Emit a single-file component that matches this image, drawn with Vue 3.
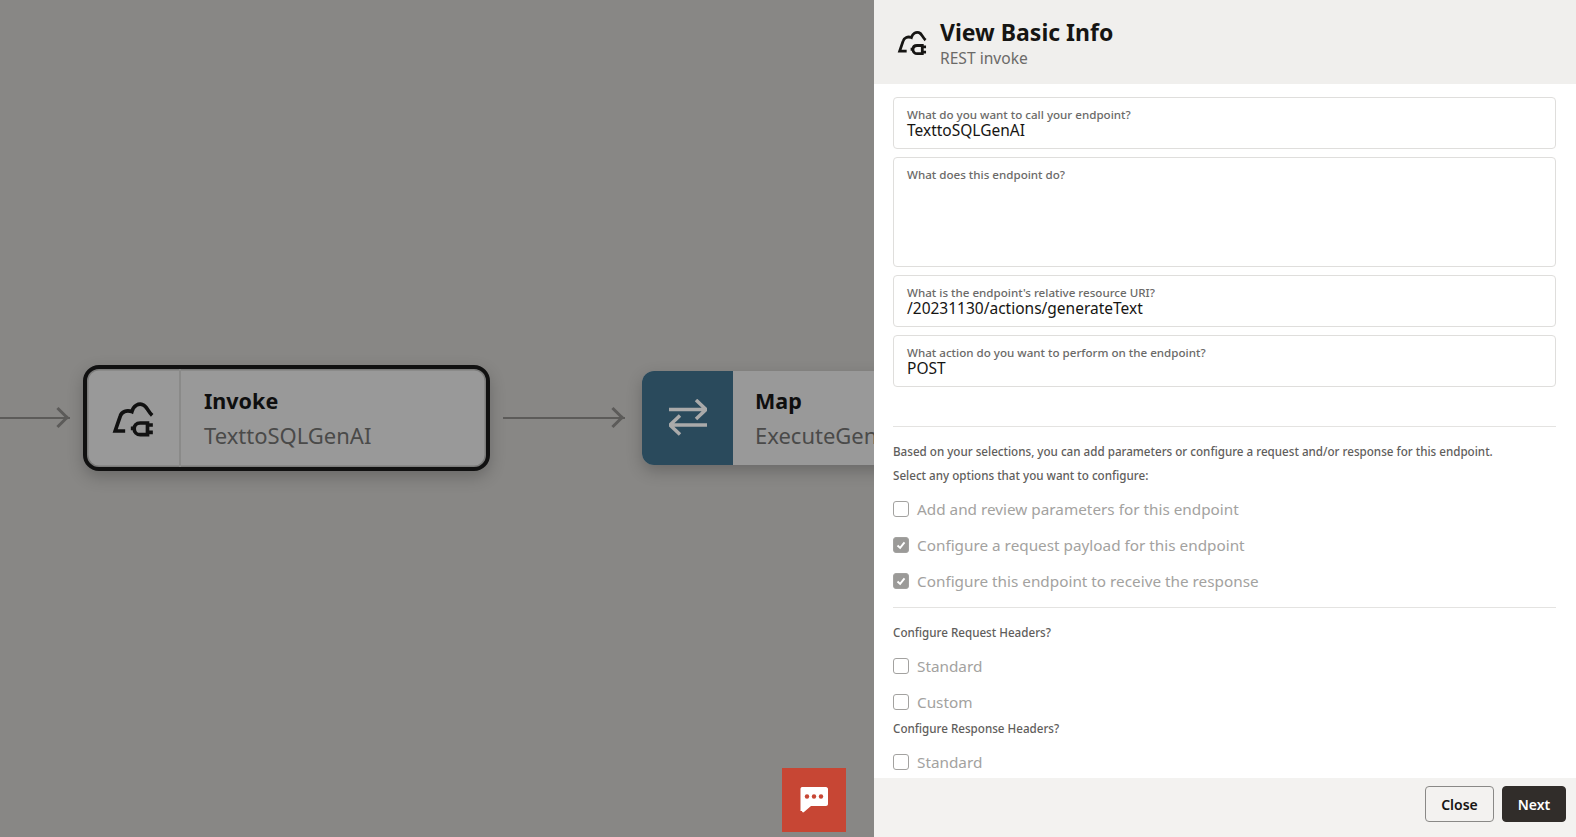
<template>
  <div class="page">
    <div class="canvas">
      <div class="arrow arrow-in"></div>
      <div class="node node-selected">
        <div class="node-icon">
          <svg class="cloud-plug" viewBox="60 53 140 120" fill="none" stroke="#111" stroke-width="11">
            <path d="M105 152H75L90 108C94 94 110 88 125 94C130 76 145 68 158 73C170 77 172 92 186 105" />
            <path d="M122 144H134M172 128H150C138 128 132 136 132 145C132 155 140 163 150 163H172V128ZM172 134H188M172 156H188" />
          </svg>
        </div>
        <div class="node-text">
          <div class="node-type">Invoke</div>
          <div class="node-name">TexttoSQLGenAI</div>
        </div>
      </div>
      <div class="arrow arrow-mid"></div>
      <div class="node node-map">
        <div class="node-icon map-icon">
          <svg class="swap" viewBox="0 0 38 37" fill="none" stroke="#aaa" stroke-width="3.500">
            <path d="M0 10.500H37M27 1L37 10.500L27 20" />
            <path d="M38 26H1M11 16.500L1 26L11 35.500" />
          </svg>
        </div>
        <div class="node-text">
          <div class="node-type">Map</div>
          <div class="node-name">ExecuteGenAISQL</div>
        </div>
      </div>
      <button class="chat-btn">
        <svg viewBox="0 0 28 26" width="28" height="26">
          <path fill="#fff" d="M2 0H26C27 0 28 1 28 2V17C28 18 27 19 26 19H11L4 25C3 26 2 25 2 24L0.500 24V2C0.500 1 1 0 2 0Z" />
          <circle cx="7" cy="9.500" r="2.200" fill="#c74634" />
          <circle cx="14" cy="9.500" r="2.200" fill="#c74634" />
          <circle cx="21" cy="9.500" r="2.200" fill="#c74634" />
        </svg>
      </button>
    </div>

    <aside class="drawer">
      <header class="drawer-head">
        <svg class="head-icon" viewBox="60 53 140 120" fill="none" stroke="#161513" stroke-width="12">
          <path d="M105 152H75L90 108C94 94 110 88 125 94C130 76 145 68 158 73C170 77 172 92 186 105" />
          <path d="M122 144H134M172 128H150C138 128 132 136 132 145C132 155 140 163 150 163H172V128ZM172 134H188M172 156H188" />
        </svg>
        <div class="head-text">
          <h1>View Basic Info</h1>
          <div class="subtitle">REST invoke</div>
        </div>
      </header>

      <div class="drawer-body">
        <div v-for="field in fields" :key="field.label" class="field" :class="{ tall: field.tall }">
          <div class="field-label">{{ field.label }}</div>
          <div class="field-value">{{ field.value }}</div>
        </div>

        <hr class="rule rule-first" />
        <p class="note note-first">Based on your selections, you can add parameters or configure a request and/or response for this endpoint.</p>
        <p class="note note-second">Select any options that you want to configure:</p>

        <label v-for="opt in options" :key="opt.text" class="check">
          <span class="box" :class="{ on: opt.on }">
            <svg v-if="opt.on" viewBox="0 0 16 16" width="14" height="14" fill="none" stroke="#fff" stroke-width="2.200">
              <path d="M4 8.500L7 11.300L12 5" />
            </svg>
          </span>
          {{ opt.text }}
        </label>

        <hr class="rule rule-second" />
        <p class="note note-req">Configure Request Headers?</p>
        <label class="check"><span class="box"></span>Standard</label>
        <label class="check"><span class="box"></span>Custom</label>
        <p class="note note-res">Configure Response Headers?</p>
        <label class="check"><span class="box"></span>Standard</label>
      </div>

      <footer class="drawer-foot">
        <button class="btn">Close</button>
        <button class="btn btn-primary">Next</button>
      </footer>
    </aside>
  </div>
</template>

<script setup>
const fields = [
  { label: "What do you want to call your endpoint?", value: "TexttoSQLGenAI" },
  { label: "What does this endpoint do?", value: "", tall: true },
  { label: "What is the endpoint's relative resource URI?", value: "/20231130/actions/generateText" },
  { label: "What action do you want to perform on the endpoint?", value: "POST" },
];

const options = [
  { text: "Add and review parameters for this endpoint", on: false },
  { text: "Configure a request payload for this endpoint", on: true },
  { text: "Configure this endpoint to receive the response", on: true },
];
</script>

<style>
html,
body {
  margin: 0;
  overflow: hidden;
}
</style>

<style scoped>
.page {
  display: flex;
  width: 1576px;
  height: 837px;
  overflow: hidden;
  font-family: "Noto Sans", "Open Sans", sans-serif;
  color: #161513;
}

.canvas {
  position: relative;
  flex: 0 0 874px;
  display: flex;
  align-items: center;
  overflow: hidden;
  background: #888785;
  padding-bottom: 2px;
  box-sizing: border-box;
}

.arrow {
  position: relative;
  flex: none;
  height: 2px;
  background: #5c5b59;
}

.arrow::after {
  content: "";
  position: absolute;
  right: 4px;
  top: -6.500px;
  width: 15px;
  height: 15px;
  border-top: 3px solid #5c5b59;
  border-right: 3px solid #5c5b59;
  box-sizing: border-box;
  transform: rotate(45deg);
}

.arrow-in {
  width: 70px;
  margin-right: 13px;
}

.arrow-mid {
  width: 122px;
  margin: 0 17px 0 13px;
}

.node {
  flex: none;
  display: flex;
  height: 94px;
  background: #999;
  border-radius: 12px;
  box-sizing: border-box;
  box-shadow: 0 6px 16px rgba(0, 0, 0, 0.22);
}

.node-selected {
  width: 407px;
  height: 106px;
  border: 4px solid #111;
  border-radius: 16px;
  box-shadow: 0 6px 16px rgba(0, 0, 0, 0.22), inset 0 0 0 1.500px #7c7c7b;
}

.node-map {
  width: 420px;
  overflow: hidden;
}

.node-icon {
  flex: none;
  width: 92px;
  display: flex;
  align-items: center;
  justify-content: center;
  border-right: 2px solid #8a8a89;
}

.map-icon {
  width: 91px;
  background: #2a4a5c;
  border-right: 0;
}

.cloud-plug {
  width: 47px;
  height: 40px;
}

.swap {
  width: 38px;
  height: 37px;
}

.node-text {
  padding-left: 22px;
  display: flex;
  flex-direction: column;
  justify-content: center;
}

.node-selected .node-text {
  padding-left: 23px;
}

.node-type {
  font-size: 21.500px;
  font-weight: 700;
  line-height: 34px;
  color: #0f0f0f;
}

.node-name {
  font-size: 22px;
  line-height: 34px;
  color: #4a4a49;
  white-space: nowrap;
}

.chat-btn {
  position: absolute;
  left: 782px;
  top: 768px;
  width: 64px;
  height: 64px;
  padding: 0;
  border: 0;
  background: #c74634;
  display: flex;
  align-items: center;
  justify-content: center;
}

.drawer {
  flex: 1;
  display: flex;
  flex-direction: column;
  background: #fff;
  min-width: 0;
}

.drawer-head {
  flex: none;
  height: 84px;
  display: flex;
  align-items: center;
  gap: 11px;
  padding-left: 22px;
  background: #f0efed;
  box-sizing: border-box;
}

.head-icon {
  width: 33px;
  height: 28px;
}

.head-text {
  padding-top: 2px;
}

h1 {
  margin: 0;
  font-size: 23px;
  font-weight: 700;
  line-height: 30px;
}

.subtitle {
  font-size: 15.600px;
  line-height: 22px;
  color: #6b6a68;
}

.drawer-body {
  flex: 1;
  min-height: 0;
  overflow: hidden;
  padding: 13px 20px 0 19px;
}

.field {
  height: 52px;
  margin-bottom: 8px;
  padding: 8.500px 12px 0 13px;
  box-sizing: border-box;
  border: 1px solid #dfdedc;
  border-radius: 4px;
}

.field.tall {
  height: 110px;
}

.field-label {
  font-size: 11.600px;
  font-weight: 500;
  line-height: 16px;
  color: #6b6a68;
}

.field-value {
  font-size: 15.500px;
  line-height: 15px;
}

.rule {
  margin: 0;
  border: 0;
  border-top: 1px solid #e4e3e1;
}

.rule-first {
  margin-top: 39px;
}

.rule-second {
  margin-top: 8px;
}

.note {
  margin: 0;
  font-size: 11.630px;
  font-weight: 500;
  line-height: 16px;
  color: #5f5e5c;
}

.note-first {
  margin-top: 17px;
}

.note-second {
  margin-top: 8px;
  margin-bottom: 7px;
}

.note-req {
  margin-top: 17px;
  margin-bottom: 7px;
}

.note-res {
  margin-top: 1px;
  margin-bottom: 7px;
}

.check {
  display: flex;
  align-items: center;
  gap: 8px;
  height: 36px;
  font-size: 15.300px;
  color: #a3a2a0;
}

.box {
  flex: none;
  width: 16px;
  height: 16px;
  box-sizing: border-box;
  border: 1px solid #a3a2a0;
  border-radius: 3px;
  display: flex;
}

.box.on {
  background: #9b9a98;
}

.drawer-foot {
  flex: none;
  height: 59px;
  display: flex;
  justify-content: flex-end;
  align-items: flex-start;
  gap: 8px;
  padding: 8px 10px 0 0;
  background: #f3f2f0;
  box-sizing: border-box;
}

.btn {
  width: 69px;
  height: 36px;
  border: 1px solid #8a8987;
  border-radius: 4px;
  background: transparent;
  font-family: inherit;
  font-size: 14px;
  font-weight: 600;
  color: #161513;
}

.btn-primary {
  width: 64px;
  background: #312d2a;
  border-color: #312d2a;
  color: #fff;
}
</style>
